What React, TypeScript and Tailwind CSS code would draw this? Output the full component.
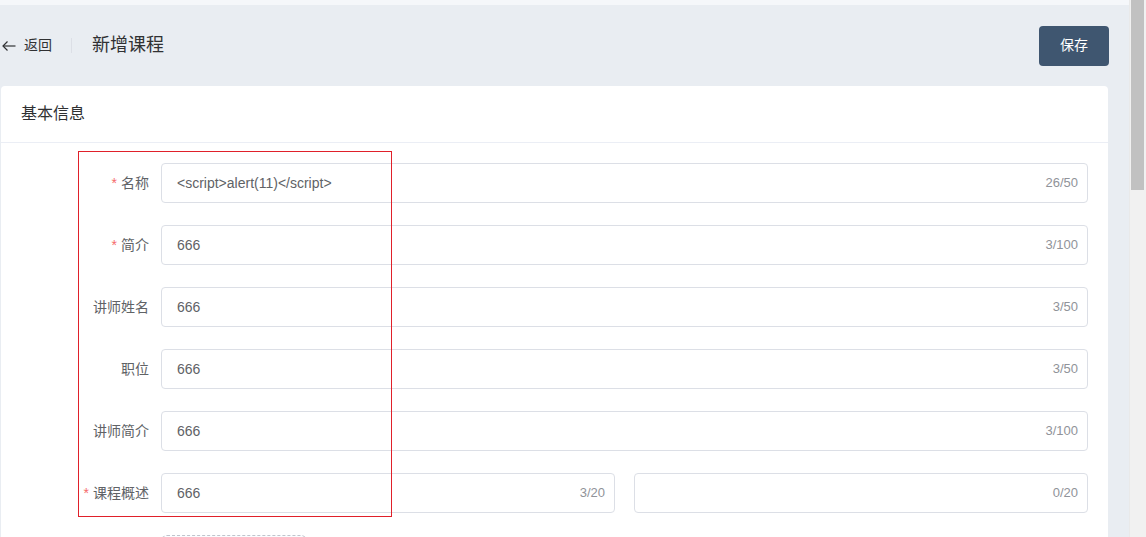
// =====================
// form rows
type Row = { label: string; value: string; count: string; required?: boolean };

const rows: Row[] = [
  { label: '名称', value: '<script>alert(11)</script>', count: '26/50', required: true },
  { label: '简介', value: '666', count: '3/100', required: true },
  { label: '讲师姓名', value: '666', count: '3/50' },
  { label: '职位', value: '666', count: '3/50' },
  { label: '讲师简介', value: '666', count: '3/100' },
];

function Label({ text, required }: { text: string; required?: boolean }) {
  return (
    <div className="w-[140px] shrink-0 pr-3 h-10 flex items-center justify-end text-[14px] text-[#606266]">
      {required && <span className="text-[#f56c6c] mr-1">*</span>}
      {text}
    </div>
  );
}

function TextInput({ value, count }: { value: string; count: string }) {
  return (
    <div className="flex-1 h-10 border border-[#dcdfe6] rounded bg-white flex items-center pl-[15px] pr-[9px]">
      <span className="flex-1 text-[14px] text-[#606266] truncate">{value}</span>
      <span className="text-[13px] text-[#909399]">{count}</span>
    </div>
  );
}

// =====================
// App Root
export default function App() {
  return (
    <div
      className="relative flex h-[537px] overflow-hidden"
      style={{ fontFamily: '"Liberation Sans", "Noto Sans CJK SC", sans-serif' }}
    >
      <div className="flex-1 flex flex-col bg-[#e9edf2]">
        <div className="h-[5px] shrink-0 bg-[#f5f7fa]" />
        <header className="h-[81px] shrink-0 flex items-center pl-[2px] pr-5">
          <div className="flex items-center text-[14px] text-[#303133]">
            <svg width="14" height="10" viewBox="0 0 14 10" fill="none" stroke="#303133" strokeWidth="1.2">
              <path d="M13.5 5H1" />
              <path d="M5.5 0.5L1 5l4.5 4.5" />
            </svg>
            <span className="ml-[8px]">返回</span>
          </div>
          <div className="w-px h-[15px] bg-[#dcdfe6] ml-[19px]" />
          <h1 className="ml-5 text-[18px] text-[#303133]">新增课程</h1>
          <button className="ml-auto w-[70px] h-10 rounded bg-[#3f5670] text-white text-[14px]">保存</button>
        </header>

        <section className="ml-[1px] mr-[21px] flex-1 bg-white rounded-t">
          <div className="h-[57px] px-5 flex items-center border-b border-[#ebeef5] text-[16px] text-[#303133]">
            基本信息
          </div>
          <div className="pt-5 pl-5 pr-5 flex flex-col gap-[22px]">
            {rows.map((r) => (
              <div key={r.label} className="flex">
                <Label text={r.label} required={r.required} />
                <TextInput value={r.value} count={r.count} />
              </div>
            ))}
            <div className="flex">
              <Label text="课程概述" required />
              <div className="flex-1 flex gap-[19px]">
                <TextInput value="666" count="3/20" />
                <TextInput value="" count="0/20" />
              </div>
            </div>
            <div className="flex">
              <div className="w-[140px] shrink-0" />
              <div className="w-[146px] h-[146px] border border-dashed border-[#c0c4cc] rounded-md bg-[#fbfdff]" />
            </div>
          </div>
        </section>
      </div>

      {/* scrollbar */}
      <div className="w-[17px] shrink-0 bg-[#f1f1f1] border-l border-[#e9e9e9] pl-[1px] pr-[2px]">
        <div className="h-[190px] bg-[#c1c1c1]" />
      </div>

      {/* red highlight box */}
      <div className="absolute left-[78px] top-[151px] w-[314px] h-[366px] border border-[#e0202a] pointer-events-none" />
    </div>
  );
}
